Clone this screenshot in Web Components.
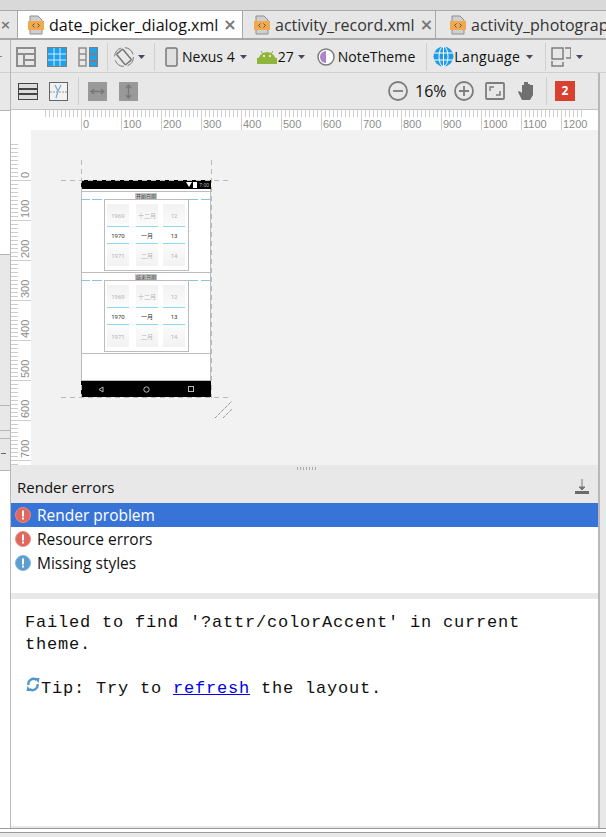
<!DOCTYPE html>
<html>
<head>
<meta charset="utf-8">
<title>date_picker_dialog.xml</title>
<style>
  html, body { margin: 0; padding: 0; background: #e8e8e8; }
  body { width: 606px; height: 837px; overflow: hidden; font-family: "Open Sans", "Noto Sans CJK SC", sans-serif; color: #111; }
</style>
</head>
<body>
<ide-window>
  <editor-tabs slot="tabs"></editor-tabs>
  <design-toolbar slot="toolbar"></design-toolbar>
  <layout-canvas slot="canvas"></layout-canvas>
  <error-panel slot="errors"></error-panel>
</ide-window>

<script>
const xmlIcon = `<svg width="17" height="20" viewBox="0 0 17 20">
  <path d="M2 1h8l4 4v14H2z" fill="#cfcfcf" stroke="#8f8f8f"/>
  <rect x="0" y="6" width="16" height="9" fill="#f2a94e"/>
  <path d="M6.500 8.500 4.500 10.500l2 2M9.500 8.500l2 2-2 2" fill="none" stroke="#555" stroke-width="1"/>
</svg>`

customElements.define('ide-window', class extends HTMLElement {
  constructor() {
    super()
    this.attachShadow({ mode: 'open' }).innerHTML = `
      <style>
        :host { display: block; width: 606px; height: 837px; }
        .top { height: 40px; }
        .main { display: flex; height: 788px; }
        .left { width: 10px; display: flex; flex-direction: column; background: #e8e8e8; flex: none; }
        .left .white { background: #fff; }
        .left .seg { border-top: 1px solid #b5b5b5; box-sizing: border-box; }
        .tick { width: 5px; height: 1px; background: #666; margin: 14px 0 0 1px; }
        .middle { width: 588px; flex: none; border-left: 1px solid #b8b8b8; box-sizing: border-box; display: flex; flex-direction: column; }
        .right { flex: 1; background: #e8e8e8; display: flex; flex-direction: column; }
        .right .r1 { height: 33px; box-sizing: border-box; border-bottom: 1px solid #d0d0d0; }
        .right .r2 { flex: 1; border-left: 2px solid #b8b8b8; }
        .foot { height: 9px; box-sizing: border-box; border-top: 1px solid #9a9a9a; }
        .foot div { height: 3px; background: #fff; border-bottom: 1px solid #9a9a9a; }
      </style>
      <div class="top"><slot name="tabs"></slot></div>
      <div class="main">
        <div class="left">
          <div style="height:33px;border-bottom:1px solid #d0d0d0;box-sizing:border-box"><div style="width:2px;height:1px;background:#888;margin-top:16px"></div></div>
          <div style="height:37px"></div>
          <div class="white" style="height:144px;border-top:1px solid #b5b5b5;box-sizing:border-box"></div>
          <div class="seg" style="height:151px"></div>
          <div class="seg" style="height:25px"></div>
          <div class="seg" style="height:8px"></div>
          <div class="seg" style="height:32px"><div class="tick"></div></div>
          <div class="white seg" style="flex:1"></div>
        </div>
        <div class="middle">
          <slot name="toolbar"></slot>
          <slot name="canvas"></slot>
          <slot name="errors"></slot>
        </div>
        <div class="right"><div class="r1"></div><div class="r2"></div></div>
      </div>
      <div class="foot"><div></div></div>`
  }
})

customElements.define('editor-tabs', class extends HTMLElement {
  constructor() {
    super()
    this.attachShadow({ mode: 'open' }).innerHTML = `
      <style>
        :host { display: flex; height: 40px; box-sizing: border-box; padding-top: 10px; background: #d9d9d9; border-bottom: 2px solid #a8a8a8; font: 16px "Open Sans", sans-serif; }
        .tab { display: flex; align-items: center; height: 28px; box-sizing: border-box; background: #e6e6e6; border-top: 1px solid #a8a8a8; border-right: 1px solid #a8a8a8; color: #333; white-space: nowrap; overflow: hidden; }
        .tab.on { background: #fff; color: #111; }
        .tab span { margin-left: 4px; }
        .tab b { font: 700 16px "DejaVu Sans", sans-serif; color: #777; margin-left: 5px; }
        svg { flex: none; }
      </style>
      <div class="tab" style="width:18px"><b style="margin:0;font-size:13px">×</b></div>
      <div class="tab on" style="width:225px;padding-left:10px">${xmlIcon}<span>date_picker_dialog.xml</span><b>×</b></div>
      <div class="tab" style="width:193px;padding-left:11px">${xmlIcon}<span>activity_record.xml</span><b>×</b></div>
      <div class="tab" style="flex:1;padding-left:14px;border-right:0">${xmlIcon}<span>activity_photograph.xml</span></div>`
  }
})

customElements.define('tool-sep', class extends HTMLElement {
  constructor() {
    super()
    this.attachShadow({ mode: 'open' }).innerHTML = `<style>:host { display: block; width: 1px; height: 28px; background: #cfcfcf; flex: none; }</style>`
  }
})

customElements.define('design-toolbar', class extends HTMLElement {
  constructor() {
    super()
    const caret = `<svg width="7" height="4" viewBox="0 0 7 4"><path d="M0 0h7L3.500 4z" fill="#444c5c"/></svg>`
    this.attachShadow({ mode: 'open' }).innerHTML = `
      <style>
        :host { display: block; height: 70px; background: #e8e8e8; font: 14px "Open Sans", sans-serif; color: #111; }
        .row { display: flex; align-items: center; position: relative; }
        .a { height: 33px; padding-top: 1px; box-sizing: border-box; border-bottom: 1px solid #d0d0d0; }
        .b { height: 37px; box-sizing: border-box; border-bottom: 1px solid #c4c4c4; }
        .pct { font-size: 16px; }
        svg { flex: none; display: block; }
      </style>
      <div class="row a">
        <svg style="margin-left:5px" width="20" height="20" viewBox="0 0 20 20"><g fill="none" stroke="#8d8d8d" stroke-width="2"><rect x="1" y="1" width="18" height="18"/><path d="M1 7h18M8 7v12M8 13h11"/></g></svg>
        <svg style="margin-left:11px" width="20" height="20" viewBox="0 0 20 20"><rect width="20" height="20" fill="#7d7d7d"/><rect x="1" y="1" width="18" height="18" fill="#1ea2ee"/><path d="M7 1v18M13 1v18M1 7h18M1 13h18" stroke="#cfe9f8"/></svg>
        <svg style="margin-left:11px" width="20" height="20" viewBox="0 0 20 20"><g fill="none" stroke="#8d8d8d" stroke-width="1.500"><rect x="1" y="1" width="7" height="18"/><path d="M1 7h7M1 13h7"/></g><rect x="11" y="0" width="9" height="20" fill="#7d7d7d"/><path fill="#1ea2ee" d="M12 1h7v5h-7zM12 8h7v5h-7zM12 15h7v4h-7z"/></svg>
        <tool-sep style="margin-left:9px"></tool-sep>
        <svg style="margin-left:6px" width="20" height="20" viewBox="0 0 20 20"><g fill="none" stroke="#777"><rect x="6" y="3" width="8" height="14" rx="1" transform="rotate(-40 10 10)" fill="#e8e8e8" stroke-width="1.500"/><circle cx="10" cy="10" r="9.400" stroke-dasharray="11 4"/></g></svg>
        <span style="margin-left:4px">${caret}</span>
        <tool-sep style="margin-left:9px"></tool-sep>
        <svg style="margin-left:10px" width="13" height="20" viewBox="0 0 13 20"><rect x="1" y="1" width="11" height="18" rx="1.500" fill="#e0e0e0" stroke="#777" stroke-width="1.500"/></svg>
        <span style="margin-left:4px">Nexus 4</span>
        <span style="margin-left:5px">${caret}</span>
        <svg style="margin-left:10px" width="20" height="14" viewBox="0 0 20 14"><path d="M1 11a9 9 0 0 1 18 0z" fill="#8fb53a"/><path d="M4 1l2 3M16 1l-2 3" stroke="#8fb53a"/><rect x="0" y="8" width="20" height="6" fill="#8fb53a"/><circle cx="7" cy="6" r="1" fill="#fff"/><circle cx="13" cy="6" r="1" fill="#fff"/></svg>
        <span style="margin-left:1px">27</span>
        <span style="margin-left:4px">${caret}</span>
        <svg style="margin-left:12px" width="18" height="18" viewBox="0 0 18 18"><circle cx="9" cy="9" r="8" fill="#fff" stroke="#7d7d7d" stroke-width="1.500"/><path d="M9 3a6 6 0 0 0 0 12z" fill="#ad85c9"/></svg>
        <span style="margin-left:3px;letter-spacing:.1px">NoteTheme</span>
        <tool-sep style="margin-left:11px"></tool-sep>
        <svg style="margin-left:6px" width="21" height="21" viewBox="0 0 21 21"><circle cx="10.500" cy="10.500" r="10" fill="#1f9be6"/><g fill="none" stroke="#fff"><ellipse cx="10.500" cy="10.500" rx="4.500" ry="10"/><path d="M10.500 .5v20M1 7h19M1 14h19"/></g></svg>
        <span style="margin-left:0;letter-spacing:.35px">Language</span>
        <span style="margin-left:6px">${caret}</span>
        <tool-sep style="margin-left:12px"></tool-sep>
        <svg style="margin-left:5px" width="20" height="20" viewBox="0 0 20 20"><g fill="none" stroke="#7d7d7d" stroke-width="1.500"><path d="M1 1h11v11H1zM14 1h6v10h-5M1 14v5h11v-4"/></g></svg>
        <span style="margin-left:5px">${caret}</span>
      </div>
      <div class="row b">
        <svg style="margin-left:7px" width="20" height="17" viewBox="0 0 20 17"><rect x=".5" y=".5" width="19" height="16" fill="#ddd" stroke="#444"/><path d="M1 6h18M1 11h18" stroke="#444" stroke-width="2"/></svg>
        <svg style="margin-left:11px" width="19" height="19" viewBox="0 0 19 19"><rect x=".5" y=".5" width="18" height="18" fill="#f2f2f2" stroke="#666"/><path d="M1 10h17" stroke="#999" stroke-dasharray="2 1"/><path d="M6 3l3 6 3-6M9 9l-2 7" fill="none" stroke="#6fa8d0" stroke-width="1.200"/></svg>
        <tool-sep style="margin-left:10px"></tool-sep>
        <svg style="margin-left:9px" width="19" height="19" viewBox="0 0 19 19"><rect width="19" height="19" fill="#999"/><path d="M3 9.500h13M6 7l-3 2.500L6 12M13 7l3 2.500L13 12" fill="none" stroke="#777" stroke-width="1.300"/></svg>
        <svg style="margin-left:12px" width="19" height="19" viewBox="0 0 19 19"><rect width="19" height="19" fill="#999"/><path d="M9.500 3v13M7 6l2.500-3L12 6M7 13l2.500 3L12 13" fill="none" stroke="#777" stroke-width="1.300"/></svg>
        <svg style="margin-left:250px" width="20" height="20" viewBox="0 0 20 20"><circle cx="10" cy="10" r="9" fill="none" stroke="#7d7d7d" stroke-width="1.800"/><path d="M5 10h10" stroke="#7d7d7d" stroke-width="1.800"/></svg>
        <span class="pct" style="margin-left:7px;width:30px;white-space:nowrap">16%</span>
        <svg style="margin-left:9px" width="20" height="20" viewBox="0 0 20 20"><circle cx="10" cy="10" r="9" fill="none" stroke="#7d7d7d" stroke-width="1.800"/><path d="M5 10h10M10 5v10" stroke="#7d7d7d" stroke-width="1.800"/></svg>
        <svg style="margin-left:11px" width="20" height="18" viewBox="0 0 20 18"><rect x="1" y="1" width="18" height="16" rx="1" fill="none" stroke="#7d7d7d" stroke-width="1.800"/><path d="M5 9V5h4M15 9v4h-4" fill="none" stroke="#7d7d7d" stroke-width="1.500"/></svg>
        <svg style="margin-left:13px" width="18" height="20" viewBox="0 0 18 20"><path d="M4 19 0 11l1-1 3 2V4h2V1h2v8V1h2v2h2v6V4h3v10l-3 5z" fill="#6f6f6f"/></svg>
        <tool-sep style="margin-left:10px"></tool-sep>
        <span style="margin-left:8px;width:20px;height:20px;background:#d8412f;color:#fff;font:700 12px/20px 'Open Sans',sans-serif;text-align:center">2</span>
      </div>`
  }
})

customElements.define('picker-cell', class extends HTMLElement {
  constructor() {
    super()
    this.attachShadow({ mode: 'open' }).innerHTML = `
      <style>
        :host { display: block; }
        .c { display: flex; flex-direction: column; width: 22px; align-items: center; font: 6px Roboto, "Noto Sans CJK SC", sans-serif; color: #b4b4b4; }
        .f { width: 22px; height: 22px; background: linear-gradient(#f2f2f2, #fbfbfb); display: flex; align-items: center; justify-content: center; }
        .f.d { background: linear-gradient(#fbfbfb, #f2f2f2); }
        .m { width: 22px; height: 18px; box-sizing: border-box; border-top: 1px solid #8ed8f0; border-bottom: 1px solid #8ed8f0; display: flex; align-items: center; justify-content: center; color: #333; }
      </style>
      <div class="c">
        <div class="f">${this.getAttribute('a')}</div>
        <div class="m">${this.getAttribute('b')}</div>
        <div class="f d">${this.getAttribute('c')}</div>
      </div>`
  }
})

customElements.define('date-section', class extends HTMLElement {
  constructor() {
    super()
    this.attachShadow({ mode: 'open' }).innerHTML = `
      <style>
        :host { display: block; position: relative; font-family: "Noto Sans CJK SC", sans-serif; }
        .title { height: 7px; display: flex; justify-content: center; align-items: center; font-size: 5px; line-height: 6px; }
        .title span { background: #c4c4c4; color: #444; padding: 0 1px; }
        .rule { position: absolute; top: 7px; left: 0; right: 0; height: 1px;
          background: linear-gradient(90deg, #8cc4e4 0 8px, transparent 8px 10px, #8cc4e4 10px 20px, transparent 20px 107px, #8cc4e4 107px 116px, transparent 116px 119px, #8cc4e4 119px 128px, transparent 128px); }
        .box { position: relative; width: 85px; height: 72px; margin: 0 0 0 22px; box-sizing: border-box; border: 1px solid #bcbcbc; background: #fff; padding: 4px 0 0 2px; display: flex; gap: 7px; }
        .box picker-cell:last-child { margin-left: -2px; }
      </style>
      <div class="title"><span>${this.getAttribute('label')}</span></div>
      <div class="rule"></div>
      <div class="box">
        <picker-cell a="1969" b="1970" c="1971"></picker-cell>
        <picker-cell a="十二月" b="一月" c="二月"></picker-cell>
        <picker-cell a="12" b="13" c="14"></picker-cell>
      </div>`
  }
})

customElements.define('device-frame', class extends HTMLElement {
  constructor() {
    super()
    this.attachShadow({ mode: 'open' }).innerHTML = `
      <style>
        :host { display: block; position: absolute; left: 50px; top: 50px; width: 130px; height: 217px; background: #fff; box-sizing: border-box; }
        .status { height: 9px; background: #000; color: #bbb; display: flex; justify-content: flex-end; align-items: center; gap: 1px; padding-right: 2px; font: 5px "Liberation Sans", sans-serif; }
        .status span { margin-left: 1px; }
        .body { height: 191px; box-sizing: border-box; padding-top: 2px; border-left: 1px solid #bcbcbc; border-right: 1px solid #bcbcbc; }
        .sec { border-top: 1px solid #bcbcbc; height: 81px; box-sizing: border-box; }
        .end { border-top: 1px solid #bcbcbc; }
        .nav { height: 17px; background: #000; border-top: 1px solid #bcbcbc; box-sizing: border-box; display: flex; align-items: center; }
        .nav svg { display: block; }
        .dash { position: absolute; pointer-events: none; }
        .h { height: 1px; left: -20px; width: 171px; background: repeating-linear-gradient(90deg, #b9b9b9 0 5px, transparent 5px 9px); }
        .v { width: 1px; top: -20px; height: 238px; background: repeating-linear-gradient(#b9b9b9 0 5px, transparent 5px 9px); }
      </style>
      <div class="status">
        <svg width="6" height="5" viewBox="0 0 6 5"><path d="M0 0h6L3 5z" fill="#fff"/></svg>
        <svg width="4" height="6" viewBox="0 0 4 6"><rect width="4" height="6" fill="#fff"/></svg>
        <span>7:00</span>
      </div>
      <div class="body">
        <div class="sec"><date-section label="开始日期"></date-section></div>
        <div class="sec"><date-section label="结束日期"></date-section></div>
        <div class="end"></div>
      </div>
      <div class="nav">
        <svg style="margin-left:17px" width="6" height="7" viewBox="0 0 6 7"><path d="M5 1v5L1 3.500z" fill="none" stroke="#bbb"/></svg>
        <svg style="margin-left:39px" width="7" height="7" viewBox="0 0 7 7"><circle cx="3.500" cy="3.500" r="2.700" fill="none" stroke="#bbb"/></svg>
        <svg style="margin-left:38px" width="6" height="6" viewBox="0 0 6 6"><rect x=".5" y=".5" width="5" height="5" fill="none" stroke="#bbb"/></svg>
      </div>
      <div class="dash h" style="top:0"></div>
      <div class="dash h" style="top:217px"></div>
      <div class="dash v" style="left:0"></div>
      <div class="dash v" style="left:130px"></div>
      <svg class="dash" style="left:134px;top:221px" width="17" height="17" viewBox="0 0 17 17"><path d="M0 17 17 0M8 17 17 8" stroke="#666" stroke-dasharray="1 1" fill="none"/></svg>`
  }
})

customElements.define('layout-canvas', class extends HTMLElement {
  constructor() {
    super()
    this.attachShadow({ mode: 'open' }).innerHTML = `
      <style>
        :host { display: grid; grid-template-columns: 20px 1fr; grid-template-rows: 20px 335px; height: 355px; background: #fff; font: 11px "Liberation Sans", sans-serif; color: #8c8c8c; }
        .top { grid-column: 1 / 3; position: relative; overflow: hidden; background: #fff; box-sizing: border-box; }
        .left { position: relative; overflow: hidden; }
        .stage { position: relative; background: #f2f2f2; overflow: hidden; }
        .num { position: absolute; line-height: 11px; }
        .t { position: absolute; background: #cdcdcd; }
      </style>
      <div class="top"></div>
      <div class="left"></div>
      <div class="stage"><device-frame></device-frame></div>`
    const top = this.shadowRoot.querySelector('.top')
    const left = this.shadowRoot.querySelector('.left')
    // zero of the horizontal ruler is at x=81 (=70 here), 40px per 100dp
    for (let v = -100; v <= 1250; v += 10) {
      const x = 70 + v * 0.4
      if (x < 33) continue
      const major = v % 100 === 0
      const tick = document.createElement('div')
      tick.className = 't'
      tick.style.cssText = `left:${Math.round(x)}px;top:0;width:1px;height:${major ? 20 : 7}px`
      top.appendChild(tick)
      if (major && v >= 0) {
        const n = document.createElement('span')
        n.className = 'num'
        n.textContent = v
        n.style.cssText = `left:${Math.round(x) + 2}px;top:9px`
        top.appendChild(n)
      }
    }
    // zero of the vertical ruler is at y=180 (=50 here)
    for (let v = -90; v <= 710; v += 10) {
      const y = 50 + v * 0.4
      if (y < 13) continue
      const major = v % 100 === 0
      const tick = document.createElement('div')
      tick.className = 't'
      tick.style.cssText = `top:${Math.round(y)}px;left:0;height:1px;width:${major ? 20 : 7}px`
      left.appendChild(tick)
      if (major && v >= 0) {
        const n = document.createElement('span')
        n.className = 'num'
        n.textContent = v
        n.style.cssText = `right:0;top:${Math.round(y) - 2}px;writing-mode:vertical-rl;transform:translateY(-100%) rotate(180deg)`
        left.appendChild(n)
      }
    }
  }
})

customElements.define('problem-row', class extends HTMLElement {
  constructor() {
    super()
    const info = this.hasAttribute('info')
    const c = info ? '#5a9fd0' : '#e0675c'
    this.attachShadow({ mode: 'open' }).innerHTML = `
      <style>
        :host { display: flex; align-items: center; height: 24px; padding-left: 4px; font: 15.5px "Open Sans", sans-serif; color: #111; }
        :host([selected]) { background: #3874d8; color: #fff; }
        svg { margin-right: 6px; flex: none; }
      </style>
      <svg width="16" height="16" viewBox="0 0 16 16"><circle cx="8" cy="8" r="7.500" fill="${c}" stroke="${info ? '#7fb4d8' : '#e88a80'}"/><rect x="7" y="3.500" width="2" height="6" fill="#fff"/><rect x="7" y="10.500" width="2" height="2" fill="#fff"/></svg>
      <span><slot></slot></span>`
  }
})

customElements.define('error-panel', class extends HTMLElement {
  constructor() {
    super()
    this.attachShadow({ mode: 'open' }).innerHTML = `
      <style>
        :host { display: flex; flex-direction: column; flex: 1; height: 363px; background: #fff; position: relative; }
        .head { height: 38px; flex: none; background: #e8e8e8; display: flex; align-items: center; justify-content: space-between; padding: 6px 9px 0 6px; box-sizing: border-box; font: 15px "Open Sans", sans-serif; color: #111; }
        .list { height: 90px; flex: none; border-bottom: 6px solid #e8e8e8; }
        .msg { flex: 1; padding: 13px 14px; font: 17px/21.5px "Liberation Mono", monospace; letter-spacing: .8px; color: #111; }
        .msg a { color: #00e; text-decoration: underline; }
        .msg svg { vertical-align: 1px; }
        .foot { height: 2px; background: #e8e8e8; flex: none; }
        .grip { position: absolute; top: 2px; left: 286px; width: 19px; height: 3px; background: repeating-linear-gradient(90deg, #aaa 0 1px, transparent 1px 3px); }
      </style>
      <div class="grip"></div>
      <div class="head">
        <span>Render errors</span>
        <svg width="14" height="16" viewBox="0 0 14 16"><path d="M7 0v11M4 8h6L7 11z" stroke="#777" fill="#777"/><rect y="12" width="14" height="3" fill="#6b6b6b"/></svg>
      </div>
      <div class="list">
        <problem-row selected>Render problem</problem-row>
        <problem-row>Resource errors</problem-row>
        <problem-row info>Missing styles</problem-row>
      </div>
      <div class="msg">Failed to find '?attr/colorAccent' in current<br>theme.<br><br><svg width="16" height="15" viewBox="0 0 15 15"><g fill="none" stroke="#4f97cf" stroke-width="2.400"><path d="M11 3a5 5 0 0 0 -8 5"/><path d="M4 12a5 5 0 0 0 8 -5"/></g><path d="M9 1l5 0-1 5zM6 14l-5 0 1-5z" fill="#4f97cf"/></svg>Tip: Try to <a href="#">refresh</a> the layout.</div>
      <div class="foot"></div>`
  }
})
</script>
</body>
</html>
